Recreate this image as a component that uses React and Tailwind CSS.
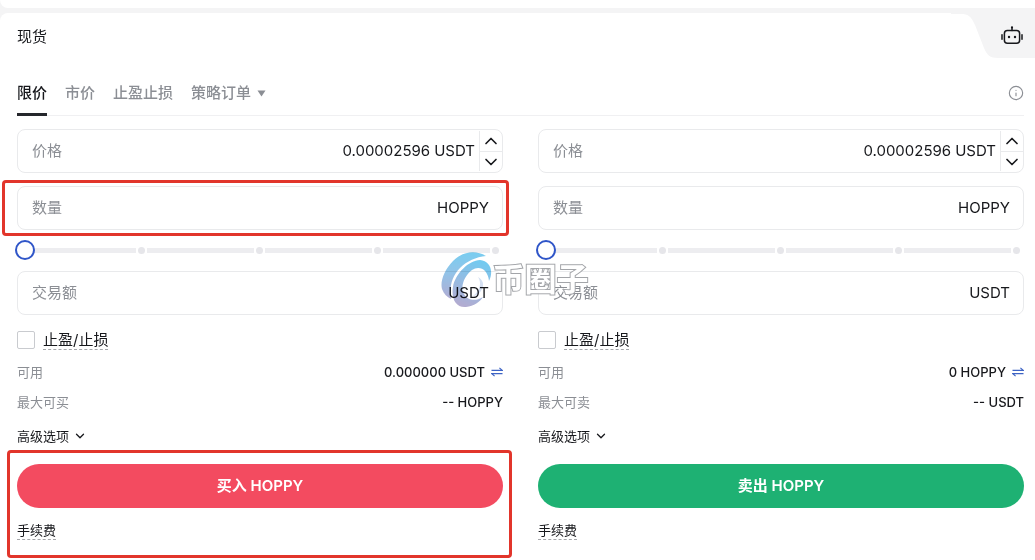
import React, { useState } from "react";
import { ChevronDown, ChevronUp, Info } from "lucide-react";

const TABS = ["限价", "市价", "止盈止损"];

const SIDES = [
  {
    id: "buy",
    available: "0.000000 USDT",
    maxLabel: "最大可买",
    max: "-- HOPPY",
    action: "买入 HOPPY",
    color: "bg-[#f34b60]",
    highlight: true,
  },
  {
    id: "sell",
    available: "0 HOPPY",
    maxLabel: "最大可卖",
    max: "-- USDT",
    action: "卖出 HOPPY",
    color: "bg-[#1eb173]",
    highlight: false,
  },
];

function RobotIcon() {
  return (
    <svg width="22" height="20" viewBox="0 0 22 20" fill="none" stroke="#17181c" strokeWidth="1.5" strokeLinecap="round">
      <path d="M11 4.5V1.5" />
      <circle cx="11" cy="1.4" r="1.1" fill="#17181c" stroke="none" />
      <rect x="3.4" y="4.4" width="15.2" height="12.8" rx="3" />
      <path d="M1 8.8v4.4M21 8.8v4.4" />
      <circle cx="8" cy="11" r="1.2" fill="#17181c" stroke="none" />
      <circle cx="14" cy="11" r="1.2" fill="#17181c" stroke="none" />
    </svg>
  );
}

function TransferIcon() {
  return (
    <svg width="12" height="10" viewBox="0 0 12 10" fill="none" stroke="#3d63c4" strokeWidth="1.2">
      <path d="M0.5 3.4h10.8L8.4 0.9" />
      <path d="M11.5 6.6H0.7l2.9 2.5" />
    </svg>
  );
}

function Field({ id, label, unit, value, onChange, onStep }) {
  return (
    <div className="flex h-11 rounded-lg border border-[#e9eaec] bg-white text-[15px]">
      <label htmlFor={id} className="flex shrink-0 items-center pl-3.5 text-[#8b8e94]">
        {label}
      </label>
      <input
        id={id}
        type="text"
        value={value}
        onChange={(e) => onChange(e.target.value)}
        className="min-w-0 flex-1 bg-transparent text-right outline-none"
      />
      <span className={onStep ? "flex items-center pr-1 pl-1" : "flex items-center pr-[13px] pl-1"}>{unit}</span>
      {onStep && (
        <div className="my-px flex w-[23px] flex-col border-l border-[#e9eaec]">
          <button type="button" aria-label="+" onClick={() => onStep(1)} className="flex flex-1 items-center justify-center border-b border-[#e9eaec]">
            <ChevronUp size={20} strokeWidth={2} />
          </button>
          <button type="button" aria-label="-" onClick={() => onStep(-1)} className="flex flex-1 items-center justify-center">
            <ChevronDown size={20} strokeWidth={2} />
          </button>
        </div>
      )}
    </div>
  );
}

function PercentSlider({ label, value, onChange }) {
  return (
    <div className="relative mb-px flex h-10 items-center">
      <div className="mr-1 ml-3 flex flex-1 items-center gap-0.5">
        {[25, 50, 75, 100].map((step) => (
          <React.Fragment key={step}>
            <span className="h-[5px] flex-1 bg-[#ededf0]" />
            <span className="size-[7px] rounded-full bg-[#e6e6ea]" />
          </React.Fragment>
        ))}
      </div>
      <input
        type="range"
        min="0"
        max="100"
        aria-label={label}
        value={value}
        onChange={(e) => onChange(Number(e.target.value))}
        className="absolute inset-y-0 -left-0.5 w-full appearance-none bg-transparent [&::-webkit-slider-thumb]:size-5 [&::-webkit-slider-thumb]:appearance-none [&::-webkit-slider-thumb]:rounded-full [&::-webkit-slider-thumb]:border-2 [&::-webkit-slider-thumb]:border-[#2f55c8] [&::-webkit-slider-thumb]:bg-white"
      />
    </div>
  );
}

function OrderForm({ side }) {
  const [price, setPrice] = useState("0.00002596");
  const [amount, setAmount] = useState("");
  const [total, setTotal] = useState("");
  const [percent, setPercent] = useState(0);
  const [tpsl, setTpsl] = useState(false);

  const stepPrice = (dir) => setPrice((Number(price) + dir * 0.00000001).toFixed(8));

  return (
    <form onSubmit={(e) => e.preventDefault()} className="min-w-0">
      {/* Price */}
      <Field id={side.id + "-price"} label="价格" unit="USDT" value={price} onChange={setPrice} onStep={stepPrice} />

      {/* Amount */}
      <div className="relative mt-[13px]">
        <Field id={side.id + "-amount"} label="数量" unit="HOPPY" value={amount} onChange={setAmount} />
        {side.highlight && (
          <span className="pointer-events-none absolute -inset-y-1.5 -right-1.5 -left-[15px] rounded-sm border-3 border-[#e2352b]" />
        )}
      </div>

      <PercentSlider label={side.action} value={percent} onChange={setPercent} />

      {/* Total */}
      <Field id={side.id + "-total"} label="交易额" unit="USDT" value={total} onChange={setTotal} />

      {/* TP/SL */}
      <div className="mt-[13px] flex h-6 items-center gap-2">
        <input
          id={side.id + "-tpsl"}
          type="checkbox"
          checked={tpsl}
          onChange={(e) => setTpsl(e.target.checked)}
          className="size-[18px] appearance-none rounded-xs border border-[#c9cbcf] checked:bg-[#2f55c8]"
        />
        <label htmlFor={side.id + "-tpsl"} className="border-b border-dashed border-[#a5a7ab] text-[15px] leading-[18px]">
          止盈/止损
        </label>
      </div>

      <dl className="mt-2.5 space-y-2.5 text-[13px] leading-5">
        <div className="flex justify-between">
          <dt className="text-[#8b8e94]">可用</dt>
          <dd className="flex items-center gap-1.5 font-medium">
            {side.available}
            <button type="button" aria-label="划转">
              <TransferIcon />
            </button>
          </dd>
        </div>
        <div className="flex justify-between">
          <dt className="text-[#8b8e94]">{side.maxLabel}</dt>
          <dd className="font-medium">{side.max}</dd>
        </div>
      </dl>

      <button type="button" className="mt-3.5 flex items-center gap-1 text-[13px] leading-5">
        高级选项
        <ChevronDown size={14} strokeWidth={2.2} />
      </button>

      {/* Submit */}
      <div className="relative mt-[18px]">
        <button type="submit" className={"h-11 w-full rounded-full text-[15px] font-semibold text-white " + side.color}>
          {side.action}
        </button>
        <div className="flex pt-3.5">
          <a href="#fee" className="border-b border-dashed border-[#a5a7ab] text-[13px] leading-[17px]">
            手续费
          </a>
        </div>
        {side.highlight && (
          <span className="pointer-events-none absolute -top-[14px] -right-[9px] -bottom-[18px] -left-[10px] rounded-sm border-3 border-[#e2352b]" />
        )}
      </div>
    </form>
  );
}

function Watermark() {
  return (
    <div aria-hidden="true" className="pointer-events-none absolute top-[121px] left-1/2 -ml-20 flex items-center">
      <svg width="52" height="60" viewBox="0 0 52 60" className="mix-blend-multiply">
        <defs>
          <linearGradient id="ring" x1="0" y1="0" x2="0" y2="1">
            <stop offset="0" stopColor="#78cdf0" />
            <stop offset="0.45" stopColor="#93c3e8" />
            <stop offset="1" stopColor="#b0acd3" />
          </linearGradient>
          <linearGradient id="swoosh" x1="0.6" y1="0" x2="0.3" y2="1">
            <stop offset="0" stopColor="#72caf0" />
            <stop offset="0.5" stopColor="#95bbe2" />
            <stop offset="1" stopColor="#b3abd0" />
          </linearGradient>
        </defs>
        <path d="M45 6C35 0 22 1 12 11C3 20 -1 32 1 39C3 44 6 47 10 49C8 37 11 26 19 18C26 11 35 7 45 6Z" fill="url(#ring)" />
        <path d="M48 31C53 21 49 11 39 10C28 10 14 24 12 37C10 49 15 58 25 57C33 56 39 52 42 47C34 52 26 50 23 44C19 37 23 26 31 20C38 15 47 19 48 31Z" fill="url(#swoosh)" />
        <path d="M37 27C41 33 39 41 32 46C38 45 43 39 42 33C41 30 39 28 37 27Z" fill="#d5e0f2" />
      </svg>
      <span className="text-[32px] leading-9 font-bold text-white [-webkit-text-stroke:2px_#a3a5a9] [paint-order:stroke_fill]">币圈子</span>
    </div>
  );
}

export default function App() {
  const [tab, setTab] = useState("限价");

  return (
    <div className="min-h-screen bg-[#f4f4f5] font-['Inter','Noto_Sans_CJK_SC',sans-serif] text-[#17181c]">
      <div className="h-2 rounded-bl-lg bg-white" />

      <main className="mt-[5px] min-h-screen rounded-tl-lg bg-white">
        <header className="flex h-12 items-center justify-between pl-[17px]">
          <h1 className="text-[15px]">现货</h1>
          <button type="button" aria-label="机器人" className="relative -mt-[5px] flex h-[50px] w-[84px] justify-end self-start pt-[18px] pr-3">
            <svg className="absolute inset-0" width="84" height="50" viewBox="0 0 84 50" fill="#f4f4f5">
              <path d="M0 0H84V50H47C39 50 36 47 33 40L24 17C20 8 17 6 10 6H0Z" />
            </svg>
            <span className="relative">
              <RobotIcon />
            </span>
          </button>
        </header>

        {/* Order type tabs */}
        <div className="mt-[9px] mr-[11px] ml-[17px] flex items-center justify-between border-b border-[#f0f0f2]">
          <nav className="flex gap-[18px] text-[15px] font-medium">
            {TABS.map((name) => (
              <button
                key={name}
                type="button"
                onClick={() => setTab(name)}
                className={
                  tab === name
                    ? "-mb-px h-[46px] border-b-3 border-[#25272c] pt-1"
                    : "-mb-px h-[46px] border-b-3 border-transparent pt-1 text-[#8b8e94]"
                }
              >
                {name}
              </button>
            ))}
            <button type="button" className="-mb-px flex h-[46px] items-center gap-1.5 border-b-3 border-transparent pt-1 text-[#8b8e94]">
              策略订单
              <svg width="9" height="7" viewBox="0 0 9 7" fill="currentColor">
                <path d="M0.5 0.5h8L4.5 6.5Z" />
              </svg>
            </button>
          </nav>
          <button type="button" aria-label="说明" className="text-[#8b8e94]">
            <Info size={16} strokeWidth={1.7} />
          </button>
        </div>

        <div className="relative mt-[13px] mr-[11px] ml-[17px] grid grid-cols-2 gap-[35px] pb-5">
          {SIDES.map((side) => (
            <OrderForm key={side.id} side={side} />
          ))}
          <Watermark />
        </div>
      </main>
    </div>
  );
}
